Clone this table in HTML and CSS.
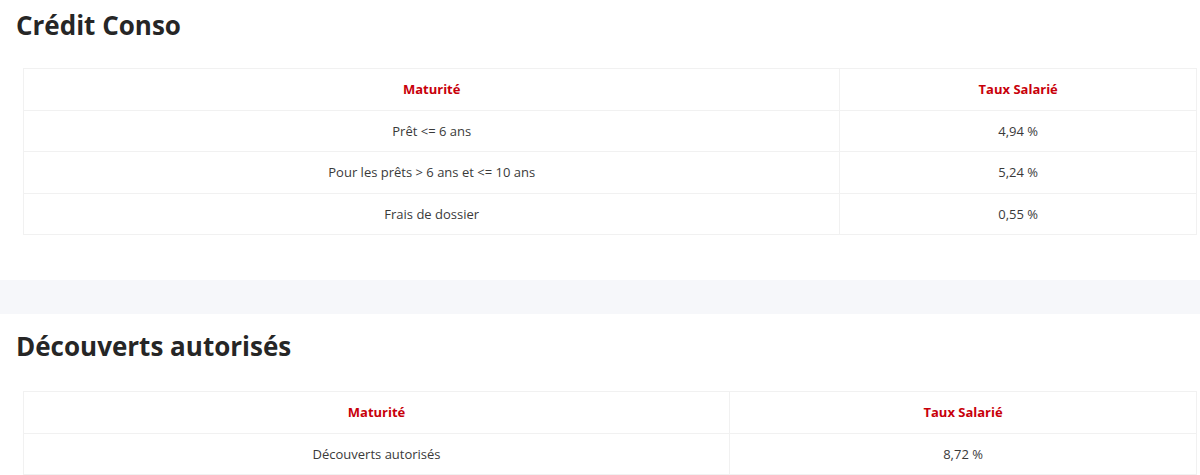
FILE: index.html
```html
<!DOCTYPE html>
<html lang="fr">

<head>
    <meta charset="UTF-8">
    <meta name="viewport" content="width=device-width, initial-scale=1.0">
    <title>Taux - Crédit Conso</title>
    <link rel="stylesheet" href="styles.css">
</head>

<body>
    <!-- credit conso -->
    <section class="rates">
        <h2 class="rates-title">Crédit Conso</h2>
        <div class="rates-wrap">
            <table class="rates-table">
                <thead>
                    <tr>
                        <th class="col-conso">Maturité</th>
                        <th>Taux Salarié</th>
                    </tr>
                </thead>
                <tbody>
                    <tr>
                        <td>Prêt &lt;= 6 ans</td>
                        <td>4,94 %</td>
                    </tr>
                    <tr>
                        <td>Pour les prêts &gt; 6 ans et &lt;= 10 ans</td>
                        <td>5,24 %</td>
                    </tr>
                    <tr>
                        <td>Frais de dossier</td>
                        <td>0,55 %</td>
                    </tr>
                </tbody>
            </table>
        </div>
    </section>

    <div class="band"></div>

    <!-- decouverts -->
    <section class="rates rates-next">
        <h2 class="rates-title">Découverts autorisés</h2>
        <div class="rates-wrap">
            <table class="rates-table">
                <thead>
                    <tr>
                        <th class="col-decouvert">Maturité</th>
                        <th>Taux Salarié</th>
                    </tr>
                </thead>
                <tbody>
                    <tr>
                        <td>Découverts autorisés</td>
                        <td>8,72 %</td>
                    </tr>
                </tbody>
            </table>
        </div>
    </section>
</body>

</html>
```

FILE: styles.css
```css
/* reset */
* {
    margin: 0;
    box-sizing: border-box;
}

body {
    font-family: "Open Sans", "Liberation Sans", sans-serif;
    color: #333;
    background: #fff;
}

/* section */
.rates {
    padding: 8px 3px 0 17px;
}

.rates-next {
    padding-top: 15px;
}

.rates-title {
    font-size: 26px;
    font-weight: 700;
    line-height: 34px;
    color: #262626;
    margin-left: -1px;
}

.rates-wrap {
    margin: 26px 0 0 6px;
}

.rates-next .rates-wrap {
    margin-top: 28px;
}

/* table */
.rates-table {
    width: 100%;
    border-collapse: collapse;
    font-size: 13px;
}

.rates-table th,
.rates-table td {
    height: 41.5px;
    padding: 0 8px;
    text-align: center;
    vertical-align: middle;
    border: 1px solid #f1f1f1;
}

.rates-table th {
    color: #c8000a;
    font-weight: 700;
}

.rates-table td {
    color: #3a3a3a;
}

.col-conso {
    width: 69.6%;
}

.col-decouvert {
    width: 60.2%;
}

/* bande grise */
.band {
    height: 34px;
    margin-top: 45px;
    background: #f6f7fa;
}
```
